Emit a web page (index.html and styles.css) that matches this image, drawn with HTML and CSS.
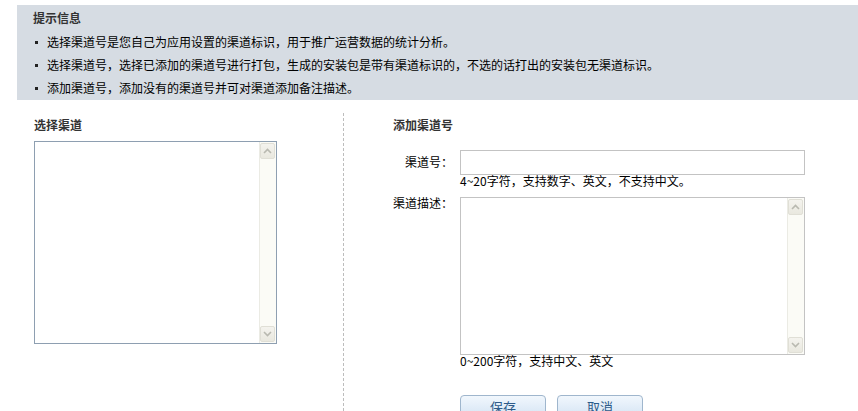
FILE: index.html
```html
<!DOCTYPE html>
<html lang="zh-CN">
<head>
<meta charset="utf-8">
<title>渠道管理</title>
<link rel="stylesheet" href="styles.css">
</head>
<body>
<div class="tips">
  <div class="tips-title">提示信息</div>
  <ul class="tips-list">
    <li>选择渠道号是您自己为应用设置的渠道标识，用于推广运营数据的统计分析。</li>
    <li>选择渠道号，选择已添加的渠道号进行打包，生成的安装包是带有渠道标识的，不选的话打出的安装包无渠道标识。</li>
    <li>添加渠道号，添加没有的渠道号并可对渠道添加备注描述。</li>
  </ul>
</div>
<div class="main">
  <div class="col-left">
    <div class="section-title">选择渠道</div>
    <div class="listbox">
      <div class="box-content"></div>
      <div class="scrollbar">
        <div class="sb-btn"><svg width="9" height="6" viewBox="0 0 9 6"><path d="M1 5 L4.5 1.5 L8 5" fill="none" stroke="#b9b9b0" stroke-width="1.6"/></svg></div>
        <div class="sb-btn"><svg width="9" height="6" viewBox="0 0 9 6"><path d="M1 1 L4.5 4.5 L8 1" fill="none" stroke="#b9b9b0" stroke-width="1.6"/></svg></div>
      </div>
    </div>
  </div>
  <div class="col-right">
    <div class="section-title">添加渠道号</div>
    <div class="form">
      <div class="label label-mid">渠道号：</div>
      <div class="field">
        <div class="input"></div>
        <div class="hint">4~20字符，支持数字、英文，不支持中文。</div>
      </div>
      <div class="label label-top">渠道描述：</div>
      <div class="field field-desc">
        <div class="textarea">
          <div class="box-content"></div>
          <div class="scrollbar">
            <div class="sb-btn"><svg width="9" height="6" viewBox="0 0 9 6"><path d="M1 5 L4.5 1.5 L8 5" fill="none" stroke="#b9b9b0" stroke-width="1.6"/></svg></div>
            <div class="sb-btn"><svg width="9" height="6" viewBox="0 0 9 6"><path d="M1 1 L4.5 4.5 L8 1" fill="none" stroke="#b9b9b0" stroke-width="1.6"/></svg></div>
          </div>
        </div>
        <div class="hint">0~200字符，支持中文、英文</div>
      </div>
      <div></div>
      <div class="buttons">
        <button class="btn" type="button">保存</button>
        <button class="btn" type="button">取消</button>
      </div>
    </div>
  </div>
</div>
</body>
</html>
```

FILE: styles.css
```css
* { box-sizing: border-box; }
html, body {
  margin: 0;
  padding: 0;
  background: #fff;
  width: 858px;
  height: 411px;
  overflow: hidden;
  font-family: "Noto Sans CJK SC", "Liberation Sans", sans-serif;
  font-size: 12px;
  color: #000;
}
.tips {
  margin: 5px 0 0 17px;
  height: 95px;
  background: #d6dce3;
  padding-left: 16px;
}
.tips-title {
  font-weight: bold;
  color: #333;
  line-height: 25px;
}
.tips-list {
  list-style: none;
  margin: 0;
  padding: 0;
}
.tips-list li {
  display: flex;
  align-items: center;
  line-height: 23px;
  height: 23px;
  white-space: nowrap;
}
.tips-list li::before {
  content: "";
  width: 3px;
  height: 3px;
  background: #222;
  margin: 1px 9px 0 2px;
  flex: none;
}
.main {
  display: flex;
  margin-left: 17px;
}
.col-left {
  width: 327px;
  margin-top: 13px;
  padding: 3px 0 0 17px;
  border-right: 1px dashed #bdbdbd;
  height: 298px;
}
.col-right {
  margin-top: 13px;
  padding: 3px 0 0 49px;
}
.section-title {
  font-weight: bold;
  color: #333;
  line-height: 18px;
  height: 18px;
}
.listbox {
  margin-top: 7px;
  width: 243px;
  height: 203px;
  border: 1px solid #8e9fb1;
  display: flex;
  background: #fff;
}
.box-content { flex: 1; }
.scrollbar {
  width: 17px;
  border-left: 1px solid #ebebe4;
  background: #fbfbf6;
  display: flex;
  flex-direction: column;
  justify-content: space-between;
  padding: 1px 1px 1px 0;
}
.sb-btn {
  width: 15px;
  height: 16px;
  border: 1px solid #e0dfd6;
  border-radius: 2px;
  background: linear-gradient(#f4f3ee, #e9e8df);
  display: flex;
  align-items: center;
  justify-content: center;
}
.form {
  margin-top: 16px;
  display: grid;
  grid-template-columns: 60px 345px;
  column-gap: 7px;
  row-gap: 10px;
}
.label {
  text-align: right;
  white-space: nowrap;
  line-height: 12px;
}
.label-mid { padding-top: 6px; }
.label-top { padding-top: 0; }
.input {
  height: 25px;
  border: 1px solid #c3c3c3;
  background: #fff;
}
.hint {
  line-height: 12px;
  height: 12px;
  white-space: nowrap;
}
.textarea {
  height: 158px;
  border: 1px solid #c3c3c3;
  display: flex;
  background: #fff;
}
.buttons {
  margin-top: 18px;
  display: flex;
  gap: 11px;
}
.btn {
  width: 86px;
  height: 24px;
  border: 1px solid #9fb6cd;
  border-radius: 4px;
  background: linear-gradient(#f1f7fd, #d3e3f3);
  color: #2d5b8a;
  font-family: "Noto Sans CJK SC", "Liberation Sans", sans-serif;
  font-size: 13px;
  padding: 0;
  line-height: 22px;
}
```
